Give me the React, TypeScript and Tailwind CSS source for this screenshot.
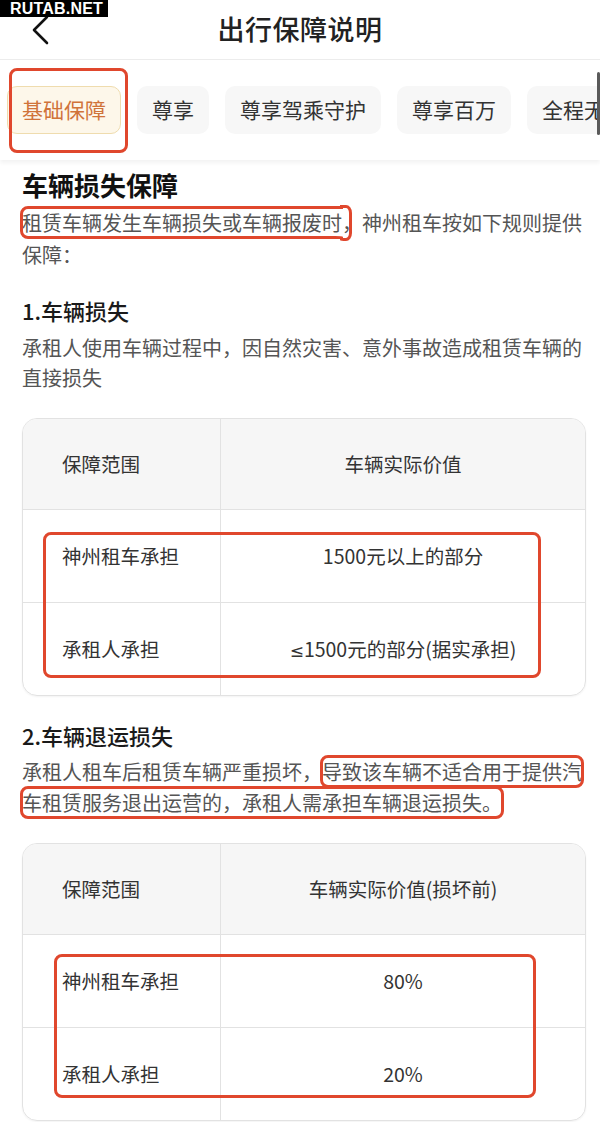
const tabs = ["基础保障", "尊享", "尊享驾乘守护", "尊享百万", "全程无忧"];

function RedBox({ className }: { className: string }) {
  return <div className={"absolute border-[3px] border-[#e0472d] rounded-[8px] pointer-events-none " + className}></div>;
}

function CoverTable({ head, rows, box }: { head: string; rows: [React.ReactNode, React.ReactNode][]; box: string }) {
  return (
    <div className="relative mt-[25px] w-[564px]">
      <div className="border border-[#e2e2e2] rounded-[15px] overflow-hidden text-[19.5px] text-[#333] shadow-[0_1px_2px_rgba(0,0,0,0.05)]">
        <div className="grid grid-cols-[198px_1fr] bg-[#f6f6f6] h-[90px] items-stretch">
          <div className="flex items-center pl-[39px] border-r border-[#e2e2e2]">保障范围</div>
          <div className="flex items-center justify-center">{head}</div>
        </div>
        {rows.map(([a, b], i) => (
          <div key={i} className="grid grid-cols-[198px_1fr] h-[93px] border-t border-[#e2e2e2]">
            <div className="flex items-center pl-[39px] border-r border-[#e2e2e2]">{a}</div>
            <div className="flex items-center justify-center">{b}</div>
          </div>
        ))}
      </div>
      <RedBox className={box} />
    </div>
  );
}

export default function App() {
  const mark = "outline-solid outline-[3px] outline-[#e0472d] outline-offset-[-1px] rounded-[6px]";
  return (
    <div className="relative w-[600px] min-h-[1122px] bg-white overflow-hidden" style={{ fontFamily: '"Noto Sans CJK SC", "Noto Sans", sans-serif' }}>
      <div className="absolute left-0 top-0 z-10 bg-black h-[17px] w-[108px] pl-[10px] flex items-center">
        <span className="text-white font-bold text-[16px] leading-none tracking-[0.2px]" style={{ fontFamily: '"Liberation Sans", Arial, sans-serif' }}>RUTAB.NET</span>
      </div>

      <header className="grid grid-cols-[80px_1fr_80px] items-center h-[60px] border-b border-[#ececec]">
        <div className="pl-[31px]">
          <svg width="20" height="32" viewBox="0 0 20 32" fill="none">
            <path d="M16 3 L3 16 L16 29" stroke="#111" strokeWidth="2.6" strokeLinecap="round" strokeLinejoin="round" />
          </svg>
        </div>
        <h1 className="text-center text-[27px] text-[#222] font-medium tracking-[0.5px]">出行保障说明</h1>
        <div></div>
      </header>

      <div className="relative h-[100px] flex items-center gap-4 pl-[7px] overflow-hidden whitespace-nowrap shadow-[0_3px_4px_rgba(0,0,0,0.05)]">
        {tabs.map((t, i) => (
          <div
            key={t}
            className={
              i === 0
                ? "shrink-0 h-[48px] px-[14px] flex items-center rounded-[10px] border border-[#efdcae] bg-[#fdf7ea] text-[#d0733a] text-[21px]"
                : "shrink-0 h-[48px] px-[14px] flex items-center rounded-[10px] border border-transparent bg-[#f7f7f7] text-[#333] text-[21px]"
            }
          >
            {t}
          </div>
        ))}
        <RedBox className="left-[9px] top-[8px] w-[119px] h-[85px]" />
        <div className="absolute right-0 top-[12px] w-[3px] h-[63px] rounded-full bg-[#5a5a5a]"></div>
      </div>

      <main className="pl-[22px] pr-[14px] pb-[6px]">
        <h2 className="mt-[8px] text-[26px] leading-[34px] font-semibold text-[#111]">车辆损失保障</h2>
        <p className="mt-[5px] text-[20px] leading-[32px] text-[#555]">
          <span className={mark}>
            租赁车辆发生车辆损失或车辆报废时<span className="inline-block w-[8px] overflow-visible">，</span>
          </span>
          <span className="ml-[12px]">神州租车按如下规则提供保障：</span>
        </p>

        <h3 className="mt-[23px] text-[22px] leading-[32px] font-medium text-[#1a1a1a]">1.车辆损失</h3>
        <p className="mt-[7px] text-[20px] leading-[30px] text-[#555]">承租人使用车辆过程中，因自然灾害、意外事故造成租赁车辆的直接损失</p>

        <CoverTable
          head="车辆实际价值"
          rows={[
            ["神州租车承担", "1500元以上的部分"],
            [
              "承租人承担",
              <span>
                <span style={{ fontFamily: '"DejaVu Sans", sans-serif' }} className="text-[17px]">≤</span>1500元的部分(据实承担)
              </span>,
            ],
          ]}
          box="left-[21px] top-[114px] w-[498px] h-[146px]"
        />

        <h3 className="mt-[23px] text-[22px] leading-[32px] font-medium text-[#1a1a1a]">2.车辆退运损失</h3>
        <p className="mt-[5px] text-[20px] leading-[31px] text-[#555]">
          承租人租车后租赁车辆严重损坏，<span className={mark}>导致该车辆不适合用于提供汽</span>
          <span className={mark}>车租赁服务退出运营的，承租人需承担车辆退运损失。</span>
        </p>

        <CoverTable
          head="车辆实际价值(损坏前)"
          rows={[
            ["神州租车承担", "80%"],
            ["承租人承担", "20%"],
          ]}
          box="left-[32px] top-[111px] w-[482px] h-[144px]"
        />
      </main>
    </div>
  );
}
